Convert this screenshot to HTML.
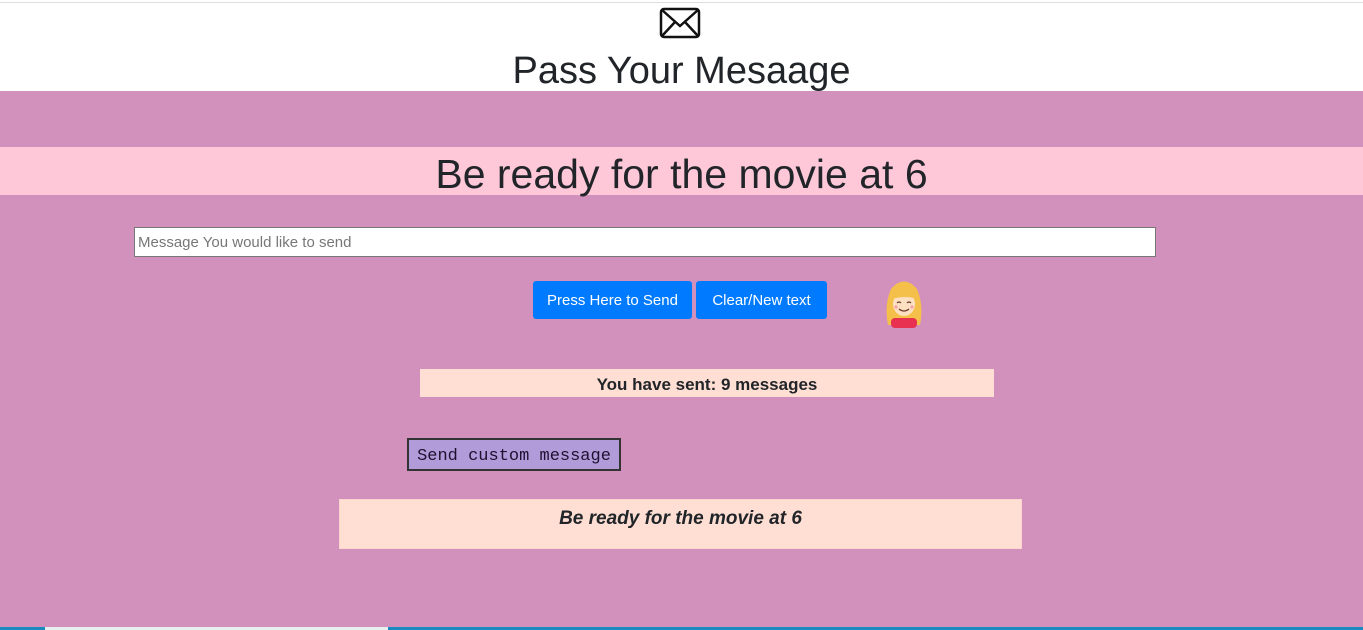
<!DOCTYPE html>
<html><head><style>
body{margin:0;width:1363px;height:630px;overflow:hidden;font-family:"Liberation Sans",sans-serif;color:#212529;background:#fff;position:relative}
.a{position:absolute}
</style></head><body>
<div class="a" style="left:0;top:2px;width:1363px;height:1px;background:#ddd"></div>
<svg class="a" style="left:659px;top:7px" width="42" height="32" viewBox="0 0 42 32"><rect x="2" y="2" width="38" height="28" rx="3" fill="none" stroke="#111" stroke-width="2.5"/><path d="M3 3 L21 19 L39 3 M3 29 L16 15 M39 29 L26 15" fill="none" stroke="#111" stroke-width="2.5"/></svg>
<div class="a" style="left:0;top:46px;width:1363px;text-align:center;font-size:38px;line-height:50px">Pass Your Mesaage</div>
<div class="a" style="left:0;top:91px;width:1363px;height:536px;background:#d291bc"></div>
<div class="a" style="left:0;top:627px;width:1363px;height:3px;background:#1a8bbf"></div>
<div class="a" style="left:45px;top:627px;width:343px;height:3px;background:#e8eeee"></div>
<div class="a" style="left:0;top:147px;width:1363px;height:48px;background:#fec8d8;text-align:center;font-size:41px;line-height:54px">Be ready for the movie at 6</div>
<div class="a" style="left:134px;top:227px;background:#fff;border:1px solid #777;font-size:15px;line-height:30px;color:#777;padding-left:3px;box-sizing:border-box;width:1022px;height:30px">Message You would like to send</div>
<div class="a" style="left:533px;top:281px;width:159px;height:38px;background:#007bff;border-radius:3px;color:#fff;font-size:15px;line-height:40px;text-align:center">Press Here to Send</div>
<div class="a" style="left:696px;top:281px;width:131px;height:38px;background:#007bff;border-radius:3px;color:#fff;font-size:15px;line-height:40px;text-align:center">Clear/New text</div>
<svg class="a" style="left:884px;top:277px" width="40" height="52" viewBox="0 0 40 52"><path d="M4 48 Q0 28 7 12 Q20 -3 33 12 Q40 28 36 48Z" fill="#f5c04a"/><ellipse cx="20" cy="27" rx="11" ry="12" fill="#fde0c2"/><path d="M8 22 Q14 8 30 12 Q34 16 33 22 Q22 18 8 22Z" fill="#f5c04a"/><rect x="7" y="41" width="26" height="10" rx="4" fill="#e83050"/><path d="M13 26 q2 -2 4 0 M23 26 q2 -2 4 0 M15 32 q5 4 10 0" stroke="#6b3b2b" fill="none" stroke-width="1.2"/><circle cx="12" cy="30" r="1.6" fill="#f7a0a8"/><circle cx="28" cy="30" r="1.6" fill="#f7a0a8"/></svg>
<div class="a" style="left:420px;top:369px;width:574px;height:28px;background:#ffdfd3;text-align:center;font-weight:bold;font-size:17px;line-height:31px">You have sent: 9 messages</div>
<div class="a" style="left:407px;top:438px;width:210px;height:29px;background:#b19cd9;border:2px solid #333;font-family:'Liberation Mono',monospace;font-size:17px;line-height:33px;text-align:center;color:#201030">Send custom message</div>
<div class="a" style="left:339px;top:499px;width:681px;height:48px;background:#ffdfd3;border:1px dotted #fcc;text-align:center;font-weight:bold;font-style:italic;font-size:19px;line-height:37px">Be ready for the movie at 6</div>
</body></html>
